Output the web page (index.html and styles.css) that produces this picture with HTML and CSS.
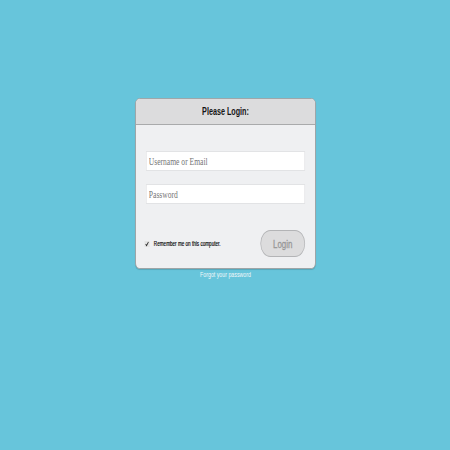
FILE: index.html
```html
<!DOCTYPE html>
<html>
<head>
<meta charset="utf-8">
<link rel="stylesheet" href="styles.css">
</head>
<body>
<div class="stage">
  <form class="card">
    <div class="card-head">Please Login:</div>
    <div class="card-body">
      <input class="field" type="text" placeholder="Username or Email">
      <input class="field" type="password" placeholder="Password">
      <div class="row">
        <label class="remember">
          <span class="check"><svg viewBox="0 0 8 8" width="7" height="6"><path d="M1.5 4.2 L3.2 6.2 L6.6 1.4" fill="none" stroke="#222" stroke-width="1.4"/></svg></span>
          <span class="remember-text">Remember me on this computer.</span>
        </label>
        <button class="login" type="button">Login</button>
      </div>
    </div>
  </form>
  <div class="forgot">Forgot your password</div>
</div>
</body>
</html>
```
FILE: styles.css
```css
html, body {
  margin: 0;
  padding: 0;
  background: #67c5db;
  height: 100%;
}
body {
  font-family: "Liberation Sans", Arial, sans-serif;
}
.stage {
  width: 251px;
  margin: 0 auto;
  padding-top: 98px;
  transform: scaleX(0.72);
  transform-origin: center top;
}
.card {
  display: block;
  margin: 0;
  border: 1px solid #9c9ea0;
  border-radius: 6px;
  background: #eff0f2;
  overflow: hidden;
  box-shadow: 0 1px 1px rgba(0,0,0,0.15);
}
.card-head {
  height: 25px;
  line-height: 25px;
  background: #dcdcdd;
  border-bottom: 1px solid #a9aaab;
  text-align: center;
  font-weight: bold;
  font-size: 10px;
  color: #151515;
}
.card-body {
  display: flex;
  flex-direction: column;
  gap: 13px;
  padding: 26px 14px 11px 14px;
}
.field {
  display: block;
  box-sizing: border-box;
  width: 100%;
  height: 20px;
  margin: 0;
  padding: 0 3px;
  border: 1px solid #e2e3e5;
  background: #ffffff;
  font-family: "Liberation Serif", "Times New Roman", serif;
  font-size: 10.5px;
  color: #333;
  outline: none;
}
.field::placeholder {
  color: #757575;
}
.row {
  display: flex;
  align-items: center;
  justify-content: space-between;
  margin-top: 13px;
}
.remember {
  display: flex;
  align-items: center;
  gap: 6px;
  margin-left: -2px;
}
.check {
  display: flex;
  width: 7px;
  height: 6px;
  background: #e4e4e4;
}
.remember-text {
  font-size: 6.4px;
  color: #000;
  -webkit-text-stroke: 0.15px #000;
}
.login {
  width: 62px;
  height: 27px;
  margin: 0;
  padding: 0;
  border: 1.5px solid #b3b4b6;
  border-radius: 14px / 13px;
  background: #dcdcdd;
  color: #969696;
  font-family: "Liberation Sans", Arial, sans-serif;
  font-size: 11px;
  -webkit-text-stroke: 0.3px #969696;
}
.forgot {
  text-align: center;
  font-size: 7.3px;
  line-height: 9px;
  margin-top: 1px;
  color: #f3f8fa;
}
```
